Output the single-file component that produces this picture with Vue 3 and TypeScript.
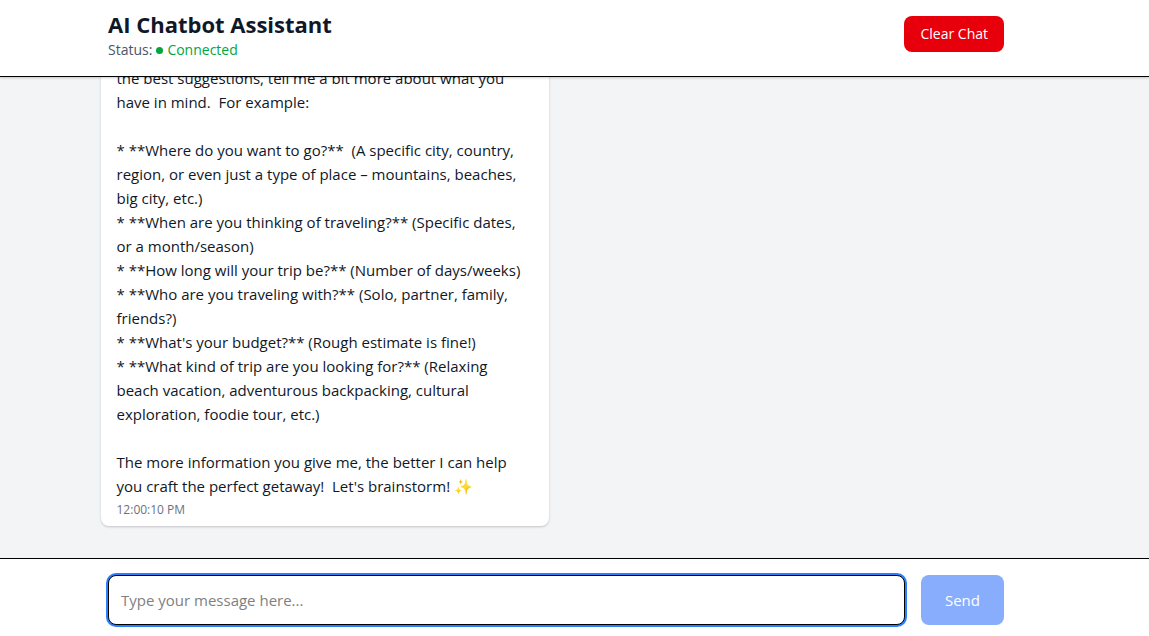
<script setup lang="ts">
import { ref } from 'vue'

interface Message {
  id: number
  text: string
  time: string
}

const draft = ref('')

const messages = ref<Message[]>([
  {
    id: 1,
    text: [
      'the best suggestions, tell me a bit more about what you have in mind.  For example:',
      '',
      '* **Where do you want to go?**  (A specific city, country, region, or even just a type of place – mountains, beaches, big city, etc.)',
      '* **When are you thinking of traveling?** (Specific dates, or a month/season)',
      '* **How long will your trip be?** (Number of days/weeks)',
      '* **Who are you traveling with?** (Solo, partner, family, friends?)',
      "* **What's your budget?** (Rough estimate is fine!)",
      '* **What kind of trip are you looking for?** (Relaxing beach vacation, adventurous backpacking, cultural exploration, foodie tour, etc.)',
      '',
      "The more information you give me, the better I can help you craft the perfect getaway!  Let's brainstorm! ✨",
    ].join('\n'),
    time: '12:00:10 PM',
  },
])

function clearChat(): void {
  messages.value = []
}

function send(): void {
  const text = draft.value.trim()
  if (!text) return
  messages.value.push({ id: Date.now(), text, time: new Date().toLocaleTimeString('en-US') })
  draft.value = ''
}
</script>

<template>
  <div class="chat">
    <header class="header">
      <div class="container header-row">
        <div>
          <h1 class="title">AI Chatbot Assistant</h1>
          <p class="status">
            <span>Status:</span>
            <span class="dot"></span>
            <span class="connected">Connected</span>
          </p>
        </div>
        <button class="clear" type="button" @click="clearChat">Clear Chat</button>
      </div>
    </header>

    <main class="messages">
      <div class="container">
        <article v-for="message in messages" :key="message.id" class="bubble">
          <p class="text">{{ message.text }}</p>
          <time class="time">{{ message.time }}</time>
        </article>
      </div>
    </main>

    <footer class="footer">
      <form class="container composer" @submit.prevent="send">
        <input
          v-model="draft"
          class="field"
          type="text"
          aria-label="Message"
          placeholder="Type your message here..."
        />
        <button class="send" type="submit" :disabled="!draft.trim()">Send</button>
      </form>
    </footer>
  </div>
</template>

<style>
body {
  margin: 0;
}
</style>

<style scoped>
.chat {
  display: flex;
  flex-direction: column;
  height: 100vh;
  background: #f3f4f6;
  color: #101828;
  font-family: "Open Sans", "Noto Sans", sans-serif;
  font-size: 15px;
  line-height: 24px;
}

.container {
  width: 100%;
  max-width: 896px;
  margin: 0 auto;
}

.header {
  position: relative;
  padding: 8px 37px 16px 0;
  border-bottom: 1px solid #000;
  background: #fff;
  box-shadow: 0 1px 3px rgba(0, 0, 0, 0.1), 0 1px 2px rgba(0, 0, 0, 0.1);
}

.header-row {
  display: flex;
  align-items: center;
  justify-content: space-between;
}

.title {
  margin: 0;
  font-size: 22px;
  line-height: 32px;
  font-weight: 700;
}

.status {
  display: flex;
  align-items: center;
  gap: 4px;
  margin: 0;
  color: #4a5565;
  font-size: 14px;
  line-height: 20px;
}

.connected {
  color: #00a63e;
}

.dot {
  width: 7px;
  height: 7px;
  border-radius: 50%;
  background: #00a63e;
}

button,
input {
  font-family: inherit;
}

.clear {
  padding: 8px 16px;
  border: 0;
  border-radius: 8px;
  background: #e7000b;
  color: #fff;
  font-size: 14px;
  line-height: 20px;
}

.messages {
  display: flex;
  flex: 1;
  min-height: 0;
  flex-direction: column;
  justify-content: flex-end;
  overflow: hidden;
  padding: 0 52px 32px 0;
}

.bubble {
  box-sizing: border-box;
  max-width: 448px;
  padding: 8px 16px;
  border-radius: 8px;
  background: #fff;
  box-shadow: 0 1px 3px rgba(0, 0, 0, 0.1), 0 1px 2px rgba(0, 0, 0, 0.1);
}

.text {
  margin: 0;
  white-space: pre-wrap;
}

.time {
  display: block;
  margin-top: 4px;
  color: #6a7282;
  font-size: 12px;
  line-height: 16px;
}

.footer {
  padding: 16px 37px 11px 0;
  border-top: 1px solid #000;
  background: #fff;
}

.composer {
  display: flex;
  gap: 16px;
}

.field {
  flex: 1;
  min-width: 0;
  height: 50px;
  box-sizing: border-box;
  padding: 12px;
  border: 1px solid #000;
  border-radius: 8px;
  outline: 0;
  background: #fff;
  color: inherit;
  box-shadow: 0 0 0 2px #2b7fff;
  font-size: 15px;
  line-height: 24px;
}

.field::placeholder {
  color: #808080;
  opacity: 1;
}

.send {
  padding: 12px 24px;
  border: 0;
  border-radius: 8px;
  background: #155dfc;
  color: #fff;
  font-size: 15px;
  line-height: 24px;
}

.send:disabled {
  opacity: 0.5;
}
</style>
